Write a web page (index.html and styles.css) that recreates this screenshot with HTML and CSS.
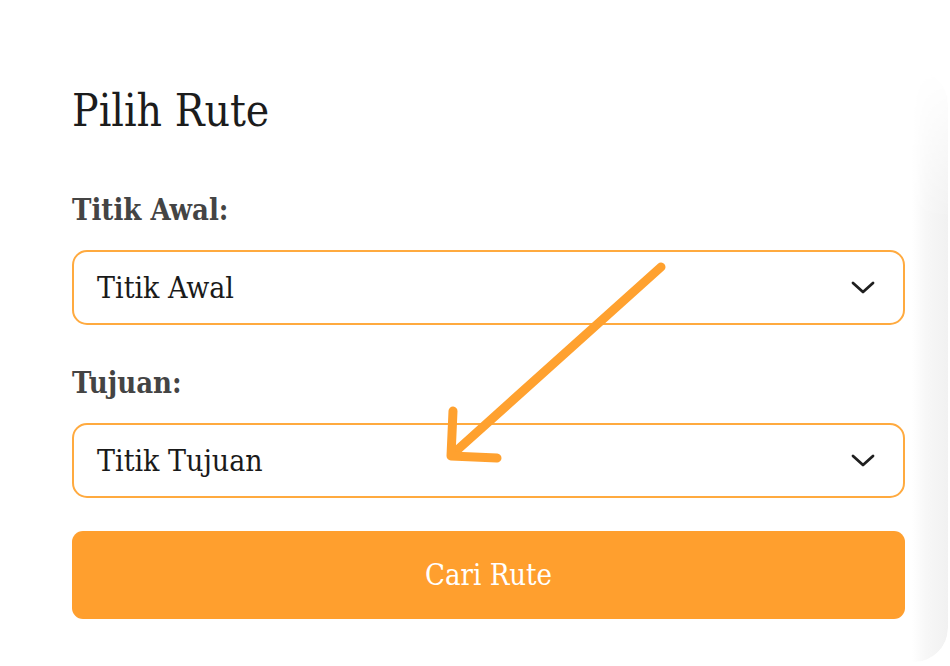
FILE: index.html
```html
<!DOCTYPE html>
<html lang="id">
<head>
<meta charset="utf-8">
<title>Pilih Rute</title>
<link rel="stylesheet" href="styles.css">
</head>
<body>
<div class="page">
  <main class="card">
    <h1 class="title">Pilih Rute</h1>
    <form class="form">
      <label class="label">Titik Awal:</label>
      <div class="select">
        <span class="select-text">Titik Awal</span>
        <svg class="chevron" width="24" height="14" viewBox="0 0 24 14"><path d="M2 2 L12 11 L22 2" fill="none" stroke="#1f1f1f" stroke-width="2.8" stroke-linecap="round" stroke-linejoin="round"/></svg>
      </div>
      <label class="label label-second">Tujuan:</label>
      <div class="select">
        <span class="select-text">Titik Tujuan</span>
        <svg class="chevron" width="24" height="14" viewBox="0 0 24 14"><path d="M2 2 L12 11 L22 2" fill="none" stroke="#1f1f1f" stroke-width="2.8" stroke-linecap="round" stroke-linejoin="round"/></svg>
      </div>
      <button type="button" class="button">Cari Rute</button>
      <svg class="annotation" width="950" height="666" viewBox="0 0 950 666">
        <g fill="none" stroke="#ffa12f" stroke-width="9" stroke-linecap="round" stroke-linejoin="round">
          <path d="M661 267 L455 452"/>
          <path d="M453 411 L451 456 L497 458"/>
        </g>
      </svg>
    </form>
  </main>
  <aside class="side"></aside>
</div>
</body>
</html>
```
FILE: styles.css
```css
* { box-sizing: border-box; }
html, body { margin: 0; padding: 0; background: #ffffff; }
body {
  font-family: "DejaVu Serif", "Liberation Serif", serif;
  font-stretch: condensed;
  width: 950px;
  height: 666px;
  overflow: hidden;
}
.page {
  display: flex;
  height: 666px;
}
.card {
  width: 913px;
  padding: 85px 7px 0 72px;
}
.title {
  margin: 0;
  font-size: 44px;
  line-height: 52px;
  font-weight: 400;
  color: #1c1c1c;
}
.form {
  display: flex;
  flex-direction: column;
  margin-top: 56px;
}
.label {
  font-size: 29px;
  line-height: 34px;
  font-weight: 700;
  color: #444444;
  margin-bottom: 23px;
}
.label-second { margin-top: 41px; }
.select {
  height: 75px;
  border: 2px solid #ffaa3f;
  border-radius: 15px;
  display: flex;
  align-items: center;
  justify-content: space-between;
  padding: 0 28px 0 23px;
}
.select-text {
  font-size: 30px;
  line-height: 35px;
  color: #1a1a1a;
}
.chevron { display: block; }
.button {
  margin-top: 33px;
  height: 88px;
  border: none;
  border-radius: 11px;
  background: #ff9f2e;
  color: #ffffff;
  font-family: inherit;
  font-stretch: condensed;
  font-size: 29px;
  cursor: pointer;
}
.annotation {
  position: absolute;
  left: 0;
  top: 0;
  pointer-events: none;
}
.side {
  width: 36px;
  margin: 70px 2px 4px 0;
  border-radius: 0 34px 34px 0;
  background: linear-gradient(to right, #ffffff 0%, #f7f7f7 40%, #f1f1f1 100%);
  -webkit-mask-image: linear-gradient(to bottom, transparent 0, #000 150px);
  mask-image: linear-gradient(to bottom, transparent 0, #000 150px);
}
```
